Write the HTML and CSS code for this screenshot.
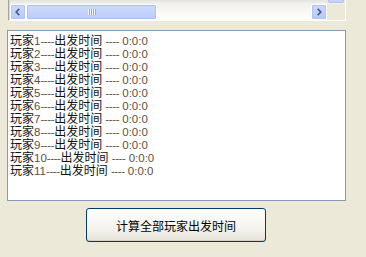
FILE: index.html
```html
<!DOCTYPE html>
<html>
<head>
<meta charset="utf-8">
<link rel="stylesheet" href="styles.css">
</head>
<body>
<div class="listbox">
  <div class="lb-inner">
    <div class="lb-top"><div class="vs-end"></div></div>
    <div class="lb-bottom">
      <div class="hscroll">
        <div class="sb-btn"><svg width="16" height="16" viewBox="0 0 16 16"><path d="M9.5 4.5 L6 8 L9.5 11.5" fill="none" stroke="#4d6185" stroke-width="2"/></svg></div>
        <div class="sb-thumb"><span class="grip"></span></div>
        <div class="sb-track"></div>
        <div class="sb-btn"><svg width="16" height="16" viewBox="0 0 16 16"><path d="M6.5 4.5 L10 8 L6.5 11.5" fill="none" stroke="#4d6185" stroke-width="2"/></svg></div>
      </div>
      <div class="corner"></div>
    </div>
  </div>
</div>
<div class="memo">
  <div class="line">玩家<span class="n">1<span class="d">----</span></span>出发时间<span class="n"> <span class="d">----</span> 0:0:0</span></div>
  <div class="line">玩家<span class="n">2<span class="d">----</span></span>出发时间<span class="n"> <span class="d">----</span> 0:0:0</span></div>
  <div class="line">玩家<span class="n">3<span class="d">----</span></span>出发时间<span class="n"> <span class="d">----</span> 0:0:0</span></div>
  <div class="line">玩家<span class="n">4<span class="d">----</span></span>出发时间<span class="n"> <span class="d">----</span> 0:0:0</span></div>
  <div class="line">玩家<span class="n">5<span class="d">----</span></span>出发时间<span class="n"> <span class="d">----</span> 0:0:0</span></div>
  <div class="line">玩家<span class="n">6<span class="d">----</span></span>出发时间<span class="n"> <span class="d">----</span> 0:0:0</span></div>
  <div class="line">玩家<span class="n">7<span class="d">----</span></span>出发时间<span class="n"> <span class="d">----</span> 0:0:0</span></div>
  <div class="line">玩家<span class="n">8<span class="d">----</span></span>出发时间<span class="n"> <span class="d">----</span> 0:0:0</span></div>
  <div class="line">玩家<span class="n">9<span class="d">----</span></span>出发时间<span class="n"> <span class="d">----</span> 0:0:0</span></div>
  <div class="line">玩家<span class="n">10<span class="d">----</span></span>出发时间<span class="n"> <span class="d">----</span> 0:0:0</span></div>
  <div class="line">玩家<span class="n">11<span class="d">----</span></span>出发时间<span class="n"> <span class="d">----</span> 0:0:0</span></div>
</div>
<button class="btn">计算全部玩家出发时间</button>
</body>
</html>
```
FILE: styles.css
```css
html, body {
  margin: 0;
  padding: 0;
  background: #ece9d8;
  width: 366px;
  height: 257px;
  overflow: hidden;
  font-family: "Noto Sans CJK SC", "Liberation Sans", sans-serif;
}
.listbox {
  margin-left: 8px;
  width: 336px;
  height: 20px;
  border-left: 1px solid #a5a397;
  border-right: 1px solid #ffffff;
  border-bottom: 1px solid #ffffff;
}
.lb-inner {
  height: 20px;
  border-left: 1px solid #dcdad0;
  display: flex;
  flex-direction: column;
}
.lb-top {
  height: 4px;
  display: flex;
  justify-content: flex-end;
  background: linear-gradient(#e2e2e0, #f2f2ef);
}
.vs-end {
  width: 14px;
  height: 2px;
  margin-right: 1px;
  background: #c3d3fb;
  border: 1px solid #b0c4f0;
  border-top: none;
  border-radius: 0 0 2px 2px;
}
.lb-bottom {
  height: 16px;
  display: flex;
}
.hscroll {
  width: 317px;
  height: 16px;
  display: flex;
  background: linear-gradient(#f3f1ec, #fefefb);
}
.sb-btn {
  width: 14px;
  height: 14px;
  border: 1px solid #ffffff;
  border-radius: 2px;
  background: linear-gradient(#cbdafd, #b6c9f8);
  box-shadow: inset 0 0 0 1px #b1c5f3;
  display: flex;
  align-items: center;
  justify-content: center;
}
.sb-btn svg {
  display: block;
  width: 14px;
  height: 14px;
}
.sb-thumb {
  width: 129px;
  height: 14px;
  border: 1px solid #ffffff;
  border-radius: 2px;
  background: linear-gradient(#cddbfd, #b9ccf9);
  box-shadow: inset 0 0 0 1px #a9c0f2;
  display: flex;
  align-items: center;
  justify-content: center;
}
.grip {
  width: 8px;
  height: 6px;
  background: repeating-linear-gradient(90deg, #eef3fe 0 1px, #8cabf0 1px 2px);
}
.sb-track {
  flex: 1;
}
.corner {
  width: 18px;
  height: 16px;
  background: #ece9d8;
}
.memo {
  margin-top: 9px;
  margin-left: 7px;
  width: 333px;
  height: 165px;
  border: 1px solid #7f9db9;
  background: #ffffff;
  padding: 2px;
  overflow: hidden;
}
.line {
  font-size: 12px;
  line-height: 13px;
  height: 13px;
  color: #111111;
  white-space: pre;
}
.n {
  font-family: "Liberation Sans", sans-serif;
  font-size: 11.5px;
  color: #5e5042;
}
.d {
  letter-spacing: -0.4px;
}
.btn {
  display: block;
  margin-top: 7px;
  margin-left: 86px;
  width: 180px;
  height: 34px;
  padding: 0;
  border: 1px solid #003c74;
  border-radius: 3px;
  background: linear-gradient(#ffffff, #f4f3ee 60%, #e6e3d8);
  box-shadow: inset 0 -1px 0 #d6d0c5;
  font-family: "Noto Sans CJK SC", sans-serif;
  font-size: 12px;
  color: #000000;
}
```
